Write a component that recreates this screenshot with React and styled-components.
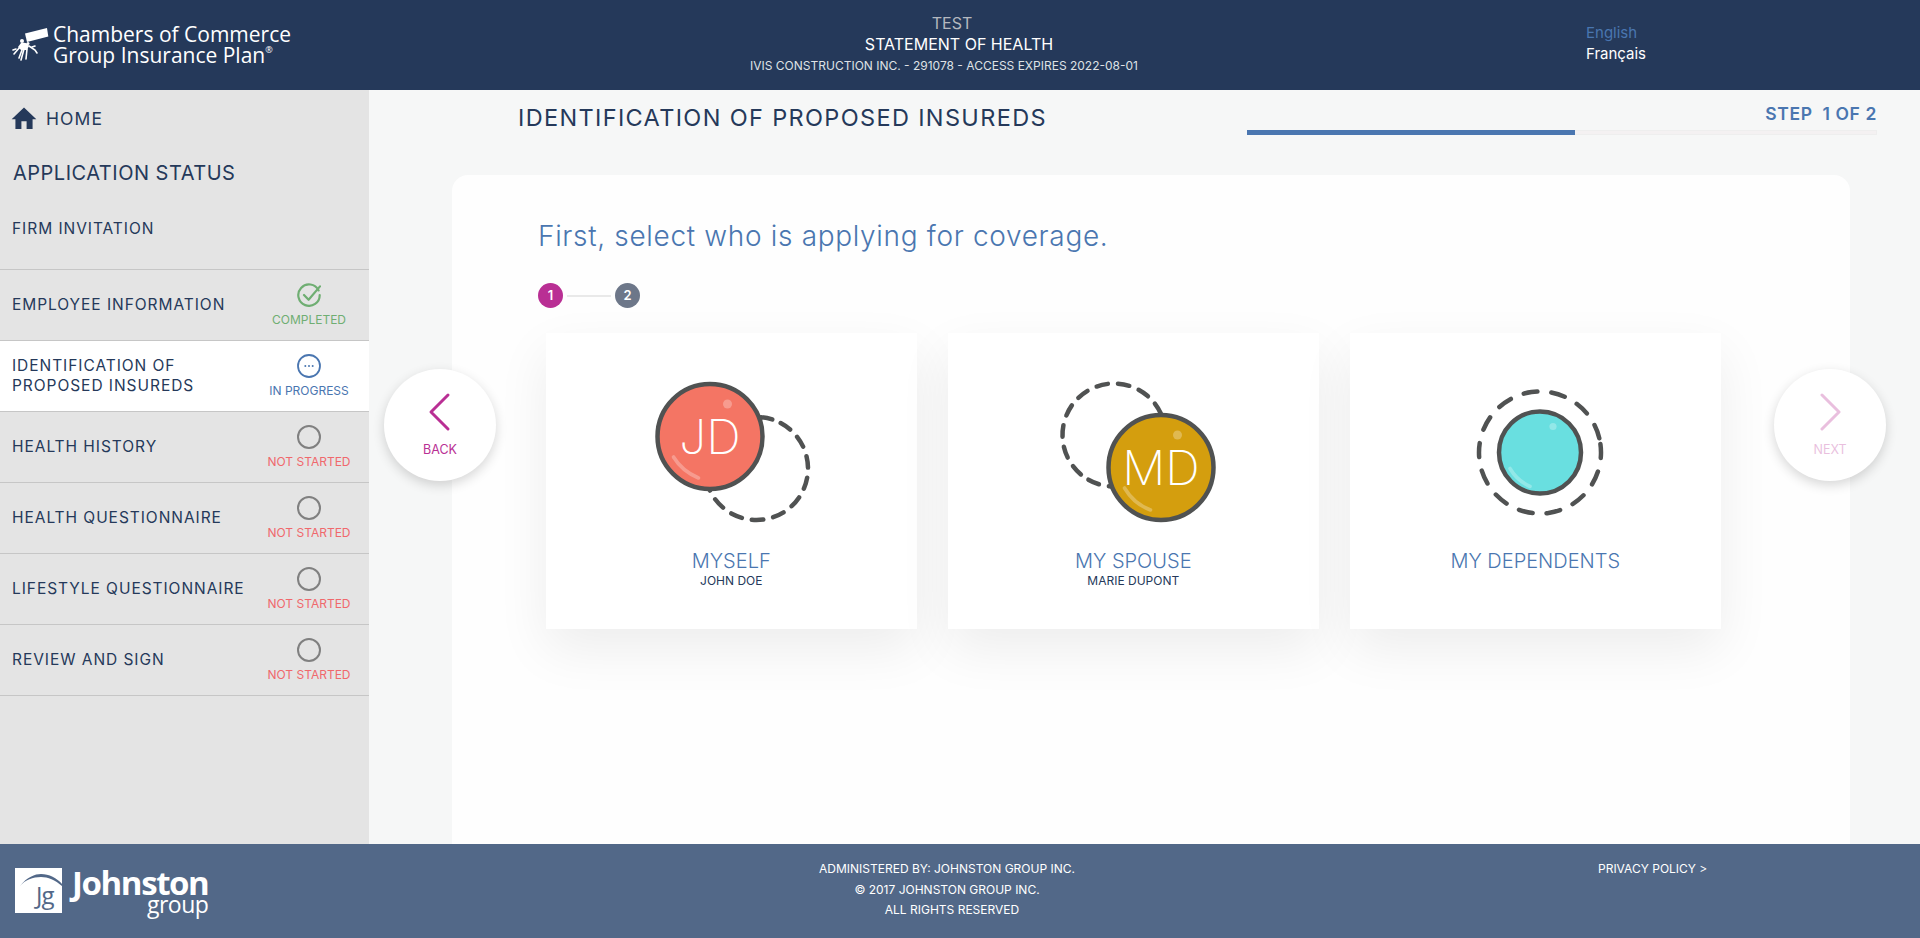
import styled, { createGlobalStyle } from "styled-components";

const GlobalStyle = createGlobalStyle`
    html, body {
        margin: 0;
        height: 100%;
        background: #f6f7f7;
    }
    body {
        font-family: "Inter", "Liberation Sans", sans-serif;
    }
`;

const NAVY = "#25395a";
const BLUE = "#4a76b0";
const MAGENTA = "#b92f94";
const HEADING = `"Inter", "Open Sans", sans-serif`;

const statusColors = {
    completed: "#6fae72",
    progress: "#4a76b0",
    none: "#f0686c",
};

const steps = [
    { label: "EMPLOYEE INFORMATION", status: "completed", text: "COMPLETED" },
    { label: "IDENTIFICATION OF\nPROPOSED INSUREDS", status: "progress", text: "IN PROGRESS", active: true },
    { label: "HEALTH HISTORY", status: "none", text: "NOT STARTED" },
    { label: "HEALTH QUESTIONNAIRE", status: "none", text: "NOT STARTED" },
    { label: "LIFESTYLE QUESTIONNAIRE", status: "none", text: "NOT STARTED" },
    { label: "REVIEW AND SIGN", status: "none", text: "NOT STARTED" },
];

const StatusIcon = ({ status }) => {
    if (status === "completed") {
        return (
            <svg width="24" height="24" viewBox="0 0 24 24" fill="none" stroke={statusColors.completed} strokeWidth="2.2" strokeLinecap="round" strokeLinejoin="round">
                <path d="M21.6 7.400A10.700 10.700 0 1 0 22.700 12" />
                <path d="M7 12l4.600 4.800L23 3.400" />
            </svg>
        );
    }
    if (status === "progress") {
        return (
            <svg width="24" height="24" viewBox="0 0 24 24" fill="none" stroke={statusColors.progress} strokeWidth="1.8">
                <circle cx="12" cy="12" r="11" />
                <circle cx="8.3" cy="12" r="1" fill={statusColors.progress} stroke="none" />
                <circle cx="12" cy="12" r="1" fill={statusColors.progress} stroke="none" />
                <circle cx="15.7" cy="12" r="1" fill={statusColors.progress} stroke="none" />
            </svg>
        );
    }
    return (
        <svg width="24" height="24" viewBox="0 0 24 24" fill="none" stroke="#808080" strokeWidth="2">
            <circle cx="12" cy="12" r="11" />
        </svg>
    );
};

const Bubble = ({ cx, cy, r, fill, initials, dot, shine }) => (
    <>
        <circle cx={cx} cy={cy} r={r} fill={fill} stroke="#505252" strokeWidth="4.5" />
        <circle cx={dot[0]} cy={dot[1]} r={dot[2]} fill="#fff" opacity="0.28" />
        <path d={shine} fill="none" stroke="#fff" strokeOpacity="0.28" strokeWidth="3.6" strokeLinecap="round" />
        {initials && (
            <text x={cx} y={cy + 17.5} textAnchor="middle" fill="#fff" fontFamily="Inter, sans-serif" fontWeight="200" fontSize="48">
                {initials}
            </text>
        )}
    </>
);

const DashedRing = ({ cx, cy, r, dash, turn = 0 }) => (
    <circle cx={cx} cy={cy} r={r} fill="none" stroke="#505252" strokeWidth="4.5" strokeLinecap="round" strokeDasharray={dash} transform={`rotate(${turn} ${cx} ${cy})`} />
);

// each drawing sits on a 200x150 stage centred in its tile
const MyselfIcon = () => (
    <svg width="200" height="150" viewBox="0 0 200 150">
        <DashedRing cx={125.5} cy={88.5} r={51.5} dash="11.5 10.1" turn={-62} />
        <Bubble cx={79} cy={56.5} r={52.5} fill="#f47564" initials="JD" dot={[96.5, 24, 4.5]} shine="M42.500 77 Q51 91 67.500 98" />
    </svg>
);

const SpouseIcon = () => (
    <svg width="200" height="150" viewBox="0 0 200 150">
        <DashedRing cx={81} cy={55} r={51.5} dash="11.5 10.1" turn={130} />
        <Bubble cx={128} cy={87.5} r={52.5} fill="#d49e0e" initials="MD" dot={[144.5, 55, 4.5]} shine="M91.500 108 Q101 124 117.500 130" />
    </svg>
);

const DependentsIcon = () => (
    <svg width="200" height="150" viewBox="0 0 200 150">
        <DashedRing cx={105} cy={72.5} r={61} dash="14 13.9" turn={-8} />
        <Bubble cx={105} cy={72.5} r={41} fill="#69dfe0" dot={[118, 46.5, 3.6]} shine="M75 88.500 Q82 100.500 95 106.500" />
    </svg>
);

const KeysLogo = () => (
    <svg width="40" height="36" viewBox="0 0 40 36" fill="#fff" stroke="none">
        <path d="M13 5.500 35 0l1.300 8.400L15 14z" />
        <circle cx="10" cy="13" r="2" />
        <circle cx="16" cy="15.500" r="1.500" />
        <path d="M9 15c4-1 7 0 8 3l-2 4-6 0-3-3z" />
        <g stroke="#fff" strokeWidth="1.6" fill="none" strokeLinecap="round">
            <path d="M8 19l-6 7" />
            <path d="M4 21l-3 1" />
            <path d="M12 21l-3 11" />
            <path d="M15 21l-1 10" />
            <path d="M10 22l-3 8" />
            <path d="M17 18l6 4 2 3" />
            <path d="M20 19l3-1" />
        </g>
    </svg>
);

const JohnstonMark = () => (
    <svg width="47" height="45" viewBox="0 0 47 45">
        <rect width="47" height="45" fill="#fff" />
        <path d="M5 18C12 9 20 6 26 6C34 6 42 10 47 16V18C40 12 33 9 26 9C18 9 10 12 5 18z" fill="#526888" />
        <text x="21" y="36" fill="#526888" fontFamily="Open Sans, sans-serif" fontSize="24" letterSpacing="-1">Jg</text>
    </svg>
);

const App = () => {
    return (
        <Page>
            <GlobalStyle />
            <Header>
                <LogoBlock>
                    <KeysLogo />
                    <LogoText>
                        <span>Chambers of Commerce</span>
                        <span>Group Insurance Plan<sup>®</sup></span>
                    </LogoText>
                </LogoBlock>
                <HeaderCenter>
                    <HeaderLine $muted $nudge={-7}>TEST</HeaderLine>
                    <HeaderLine>STATEMENT OF HEALTH</HeaderLine>
                    <HeaderLine $small $nudge={-15}>IVIS CONSTRUCTION INC. - 291078 - ACCESS EXPIRES 2022-08-01</HeaderLine>
                </HeaderCenter>
                <LangList>
                    <LangItem $current>English</LangItem>
                    <LangItem>Français</LangItem>
                </LangList>
            </Header>

            <Body>
                <Sidebar>
                    <HomeLink>
                        <svg width="26" height="26" viewBox="0 0 20 20" fill={NAVY}>
                            <path d="M8 18.500v-6h4v6h4.600v-7.600h2.900L10 2 .5 10.900h2.900v7.600z" />
                        </svg>
                        <span>HOME</span>
                    </HomeLink>
                    <SideTitle>APPLICATION STATUS</SideTitle>
                    <FirmRow>FIRM INVITATION</FirmRow>
                    {steps.map((step) => (
                        <StepRow key={step.label} $active={step.active}>
                            <StepLabel>{step.label}</StepLabel>
                            <StepStatus>
                                <StatusIcon status={step.status} />
                                <StatusText $status={step.status}>{step.text}</StatusText>
                            </StepStatus>
                        </StepRow>
                    ))}
                </Sidebar>

                <Main>
                    <TopRow>
                        <PageTitle>IDENTIFICATION OF PROPOSED INSUREDS</PageTitle>
                        <Progress>
                            <StepCount>STEP &nbsp;1 OF 2</StepCount>
                            <Track>
                                <Fill style={{ width: "52%" }} />
                            </Track>
                        </Progress>
                    </TopRow>
                    <Card>
                        <Question>First, select who is applying for coverage.</Question>
                        <Dots>
                            <Dot $current>1</Dot>
                            <DotLine />
                            <Dot>2</Dot>
                        </Dots>
                        <Tiles>
                            <Tile>
                                <TileArt><MyselfIcon /></TileArt>
                                <TileTitle>MYSELF</TileTitle>
                                <TileName>JOHN DOE</TileName>
                            </Tile>
                            <Tile>
                                <TileArt><SpouseIcon /></TileArt>
                                <TileTitle>MY SPOUSE</TileTitle>
                                <TileName>MARIE DUPONT</TileName>
                            </Tile>
                            <Tile>
                                <TileArt><DependentsIcon /></TileArt>
                                <TileTitle>MY DEPENDENTS</TileTitle>
                            </Tile>
                        </Tiles>
                    </Card>
                    <NavButton $side="left">
                        <svg width="24" height="40" viewBox="0 0 24 40" fill="none" stroke={MAGENTA} strokeWidth="3" strokeLinecap="round" strokeLinejoin="round">
                            <path d="M20 3 3 20l17 17" />
                        </svg>
                        <span>BACK</span>
                    </NavButton>
                    <NavButton $side="right" $disabled>
                        <svg width="24" height="40" viewBox="0 0 24 40" fill="none" stroke={MAGENTA} strokeWidth="3" strokeLinecap="round" strokeLinejoin="round">
                            <path d="M4 3l17 17L4 37" />
                        </svg>
                        <span>NEXT</span>
                    </NavButton>
                </Main>
            </Body>

            <Footer>
                <FooterBrand>
                    <JohnstonMark />
                    <BrandWords>
                        <BrandName>Johnston</BrandName>
                        <BrandSub>group</BrandSub>
                    </BrandWords>
                </FooterBrand>
                <FooterCenter>
                    <div>ADMINISTERED BY: JOHNSTON GROUP INC.</div>
                    <div>© 2017 JOHNSTON GROUP INC.</div>
                    <FooterLast>ALL RIGHTS RESERVED</FooterLast>
                </FooterCenter>
                <FooterLink>PRIVACY POLICY &gt;</FooterLink>
            </Footer>
        </Page>
    );
};

export default App;

const Page = styled.div`
    display: flex;
    flex-direction: column;
    height: 100vh;
    overflow: hidden;
`;

const Header = styled.header`
    flex: 0 0 90px;
    display: flex;
    background: ${NAVY};
    color: #fff;
`;

const LogoBlock = styled.div`
    width: 369px;
    box-sizing: border-box;
    padding: 28px 0 0 12px;
    display: flex;
    align-items: flex-start;
    gap: 1px;
`;

const LogoText = styled.div`
    display: flex;
    flex-direction: column;
    margin-top: -4px;
    font-family: "Open Sans", sans-serif;
    font-size: 21px;
    line-height: 21px;

    sup {
        font-size: 9px;
        line-height: 0;
        vertical-align: 10px;
    }
`;

const HeaderCenter = styled.div`
    width: 612px;
    margin-left: 284px;
    padding-top: 13px;
    display: flex;
    flex-direction: column;
    align-items: center;
`;

const HeaderLine = styled.div`
    height: 21px;
    line-height: 21px;
    font-size: ${(p) => (p.$small ? "12px" : "16px")};
    color: ${(p) => (p.$muted ? "#b4b8bf" : p.$small ? "#dfe2e6" : "#fff")};
    margin-left: ${(p) => (p.$nudge || 0) * 2}px;
`;

const LangList = styled.div`
    margin-left: 321px;
    padding-top: 22px;
    display: flex;
    flex-direction: column;
`;

const LangItem = styled.div`
    font-size: 15px;
    line-height: 21px;
    color: ${(p) => (p.$current ? BLUE : "#fff")};
`;

const Body = styled.div`
    flex: 1;
    display: flex;
    min-height: 0;
`;

const Sidebar = styled.aside`
    flex: 0 0 369px;
    background: #e4e4e4;
    color: ${NAVY};
    font-family: ${HEADING};
`;

const HomeLink = styled.div`
    height: 56px;
    box-sizing: border-box;
    padding: 0 0 0 11px;
    display: flex;
    align-items: center;
    gap: 9px;
    font-size: 17.5px;
    letter-spacing: 1.1px;
`;

const SideTitle = styled.div`
    height: 54px;
    line-height: 54px;
    padding-left: 13px;
    font-size: 20px;
    letter-spacing: 0.5px;
`;

const FirmRow = styled.div`
    height: 70px;
    padding: 0 0 0 12px;
    box-sizing: border-box;
    line-height: 58px;
    font-size: 15.5px;
    letter-spacing: 0.95px;
    border-bottom: 1px solid #c6c6c6;
`;

const StepRow = styled.div`
    height: 71px;
    box-sizing: border-box;
    display: flex;
    align-items: center;
    justify-content: space-between;
    padding: 0 10px 0 12px;
    background: ${(p) => (p.$active ? "#fff" : "transparent")};
    border-bottom: 1px solid #c6c6c6;
`;

const StepLabel = styled.div`
    white-space: pre-line;
    font-size: 15.5px;
    line-height: 20.500px;
    letter-spacing: 0.95px;
`;

const StepStatus = styled.div`
    flex: 0 0 100px;
    align-self: flex-start;
    padding-top: 13px;
    display: flex;
    flex-direction: column;
    align-items: center;
    gap: 5px;

    svg {
        display: block;
    }
`;

const StatusText = styled.div`
    font-size: 12px;
    line-height: 16px;
    color: ${(p) => statusColors[p.$status]};
`;

const Main = styled.main`
    position: relative;
    flex: 1;
    min-width: 0;
    display: flex;
    flex-direction: column;
`;

const TopRow = styled.div`
    flex: 0 0 85px;
    display: flex;
    justify-content: space-between;
    padding: 0 43px 0 149px;
`;

const PageTitle = styled.h1`
    margin: 13px 0 0;
    font-family: ${HEADING};
    font-weight: 400;
    font-size: 23.5px;
    line-height: 29px;
    letter-spacing: 1.35px;
    color: ${NAVY};
`;

const Progress = styled.div`
    width: 630px;
    padding-top: 13px;
    display: flex;
    flex-direction: column;
    align-items: flex-end;
`;

const StepCount = styled.div`
    font-family: ${HEADING};
    font-weight: 600;
    font-size: 17.5px;
    line-height: 22px;
    letter-spacing: 0.6px;
    color: ${BLUE};
    margin-bottom: 5px;
`;

const Track = styled.div`
    width: 100%;
    height: 5px;
    background: #f4f1f2;
    box-shadow: inset 0 0 0 1px #eeeeee;
`;

const Fill = styled.div`
    height: 100%;
    background: ${BLUE};
`;

const Card = styled.section`
    flex: 1;
    margin: 0 70px 0 83px;
    padding: 43px 0 0 86px;
    background: #fefefe;
    border-radius: 16px 16px 0 0;
`;

const Question = styled.div`
    font-family: ${HEADING};
    font-weight: 300;
    font-size: 28px;
    line-height: 36px;
    letter-spacing: 0.67px;
    color: ${BLUE};
`;

const Dots = styled.div`
    margin-top: 29px;
    display: flex;
    align-items: center;
    gap: 4px;
`;

const Dot = styled.div`
    width: 25px;
    height: 25px;
    border-radius: 50%;
    background: ${(p) => (p.$current ? MAGENTA : "#6d7789")};
    color: #fff;
    font-size: 13px;
    font-weight: 600;
    line-height: 25px;
    text-align: center;
`;

const DotLine = styled.div`
    width: 44px;
    height: 2px;
    background: #e9e9e9;
`;

const Tiles = styled.div`
    margin: 25px 0 0 8px;
    display: flex;
    gap: 31.5px;
`;

const Tile = styled.div`
    width: 370.5px;
    height: 296px;
    background: #fff;
    box-shadow: 0 20px 50px rgba(0, 0, 0, 0.07);
    display: flex;
    flex-direction: column;
    align-items: center;
`;

const TileArt = styled.div`
    height: 150px;
    margin-top: 47px;

    svg {
        display: block;
    }
`;

const TileTitle = styled.div`
    margin-top: 18px;
    font-size: 20px;
    font-weight: 300;
    line-height: 26px;
    color: ${BLUE};
`;

const TileName = styled.div`
    margin-top: -1px;
    font-size: 12px;
    line-height: 15px;
    color: ${NAVY};
`;

const NavButton = styled.div`
    position: absolute;
    top: 279px;
    ${(p) => (p.$side === "left" ? "left: 15px;" : "right: 34px;")}
    width: 112px;
    height: 112px;
    border-radius: 50%;
    background: #fff;
    box-shadow: 0 4px 12px rgba(0, 0, 0, 0.16);
    display: flex;
    flex-direction: column;
    align-items: center;
    padding-top: 23px;
    box-sizing: border-box;
    font-size: 12.5px;
    color: ${MAGENTA};

    svg, span {
        opacity: ${(p) => (p.$disabled ? 0.3 : 1)};
    }

    svg {
        display: block;
    }

    span {
        margin-top: 10px;
        line-height: 16px;
    }
`;

const Footer = styled.footer`
    flex: 0 0 94px;
    display: flex;
    background: #526888;
    color: #fff;
`;

const FooterBrand = styled.div`
    width: 369px;
    box-sizing: border-box;
    padding: 22px 0 0 15px;
    display: flex;
    gap: 10px;
    align-items: flex-start;

    svg {
        display: block;
        margin-top: 2px;
    }
`;

const BrandWords = styled.div`
    display: flex;
    flex-direction: column;
    align-items: flex-end;
`;

const BrandName = styled.div`
    font-family: "Open Sans", sans-serif;
    font-size: 33px;
    font-weight: 700;
    line-height: 34px;
    letter-spacing: -1.400px;
`;

const BrandSub = styled.div`
    margin-top: -6px;
    font-family: "Open Sans", sans-serif;
    font-size: 23px;
    line-height: 20px;
    letter-spacing: -0.5px;
`;

const FooterCenter = styled.div`
    width: 614px;
    margin-left: 271px;
    padding-top: 15px;
    text-align: center;
    font-size: 12px;
    line-height: 20.500px;
`;

const FooterLast = styled.div`
    margin-left: 10px;
`;

const FooterLink = styled.div`
    margin-left: 344px;
    padding-top: 15px;
    font-size: 12px;
    line-height: 20.500px;
`;
